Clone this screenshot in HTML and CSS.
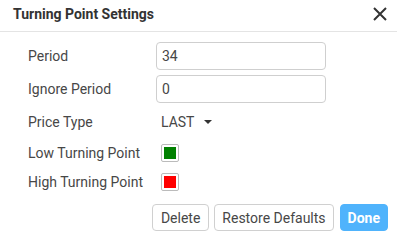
FILE: index.html
```html
<!DOCTYPE html>
<html>
<head>
<meta charset="utf-8">
<link rel="stylesheet" href="styles.css">
</head>
<body>
<div class="dialog">
  <div class="header">
    <div class="title">Turning Point Settings</div>
    <svg class="close" width="14" height="14" viewBox="0 0 14 14"><path d="M1 1L13 13M13 1L1 13" stroke="#333" stroke-width="2" fill="none"/></svg>
  </div>
  <div class="form">
    <div class="label">Period</div>
    <div class="field"><div class="input">34</div></div>
    <div class="label">Ignore Period</div>
    <div class="field"><div class="input">0</div></div>
    <div class="label">Price Type</div>
    <div class="field"><div class="select">LAST <span class="caret"></span></div></div>
    <div class="label">Low Turning Point</div>
    <div class="field"><span class="swatch"><span class="fill green"></span></span></div>
    <div class="label">High Turning Point</div>
    <div class="field"><span class="swatch"><span class="fill red"></span></span></div>
  </div>
  <div class="buttons">
    <button class="btn">Delete</button>
    <button class="btn">Restore Defaults</button>
    <button class="btn primary">Done</button>
  </div>
</div>
</body>
</html>
```
FILE: styles.css
```css
html, body {
  margin: 0;
  padding: 0;
  background: #fff;
}
body {
  font-family: Roboto, "Liberation Sans", sans-serif;
  font-size: 14px;
  color: #474747;
}
.dialog {
  width: 397px;
}
.header {
  border-bottom: 1px solid #e4e4e4;
  display: flex;
  align-items: center;
  justify-content: space-between;
  padding: 0 10px 0 13px;
  box-sizing: border-box;
  height: 32px;
}
.title {
  font-weight: bold;
  color: #333;
  font-size: 14px;
  margin-top: -4px;
}
.close {
  margin-top: -4px;
}
.form {
  display: grid;
  grid-template-columns: 128px 170px;
  grid-template-rows: 28px 28px 28px 24px 24px;
  row-gap: 5px;
  padding: 10px 0 0 28px;
}
.label {
  display: flex;
  align-items: center;
}
.field {
  display: flex;
  align-items: center;
}
.input {
  box-sizing: border-box;
  width: 170px;
  height: 28px;
  border: 1px solid #cfcfcf;
  border-radius: 4px;
  padding: 0 5px;
  display: flex;
  align-items: center;
}
.select {
  padding-left: 5px;
  display: flex;
  align-items: center;
}
.caret {
  display: inline-block;
  width: 0;
  height: 0;
  margin-left: 10px;
  border-left: 4px solid transparent;
  border-right: 4px solid transparent;
  border-top: 4px solid #333;
}
.swatch {
  box-sizing: border-box;
  width: 18px;
  height: 18px;
  margin-left: 5px;
  border: 1px solid #bbb;
  border-radius: 2px;
  padding: 2px;
  display: flex;
}
.fill {
  flex: 1;
}
.green { background: #008000; }
.red { background: #ff0000; }
.buttons {
  display: flex;
  justify-content: flex-end;
  gap: 5px;
  padding: 10px 9px 0 0;
}
.btn {
  font-family: Roboto, "Liberation Sans", sans-serif;
  font-size: 14px;
  color: #474747;
  background: #fff;
  border: 1px solid #d0d0d0;
  border-radius: 4px;
  height: 27px;
  padding: 0 7px;
}
.btn:first-child {
  padding: 0 8px;
}
.btn.primary {
  background: #4fb3fc;
  border-color: #4fb3fc;
  color: #fff;
  font-weight: bold;
  margin-left: 1px;
}
```
